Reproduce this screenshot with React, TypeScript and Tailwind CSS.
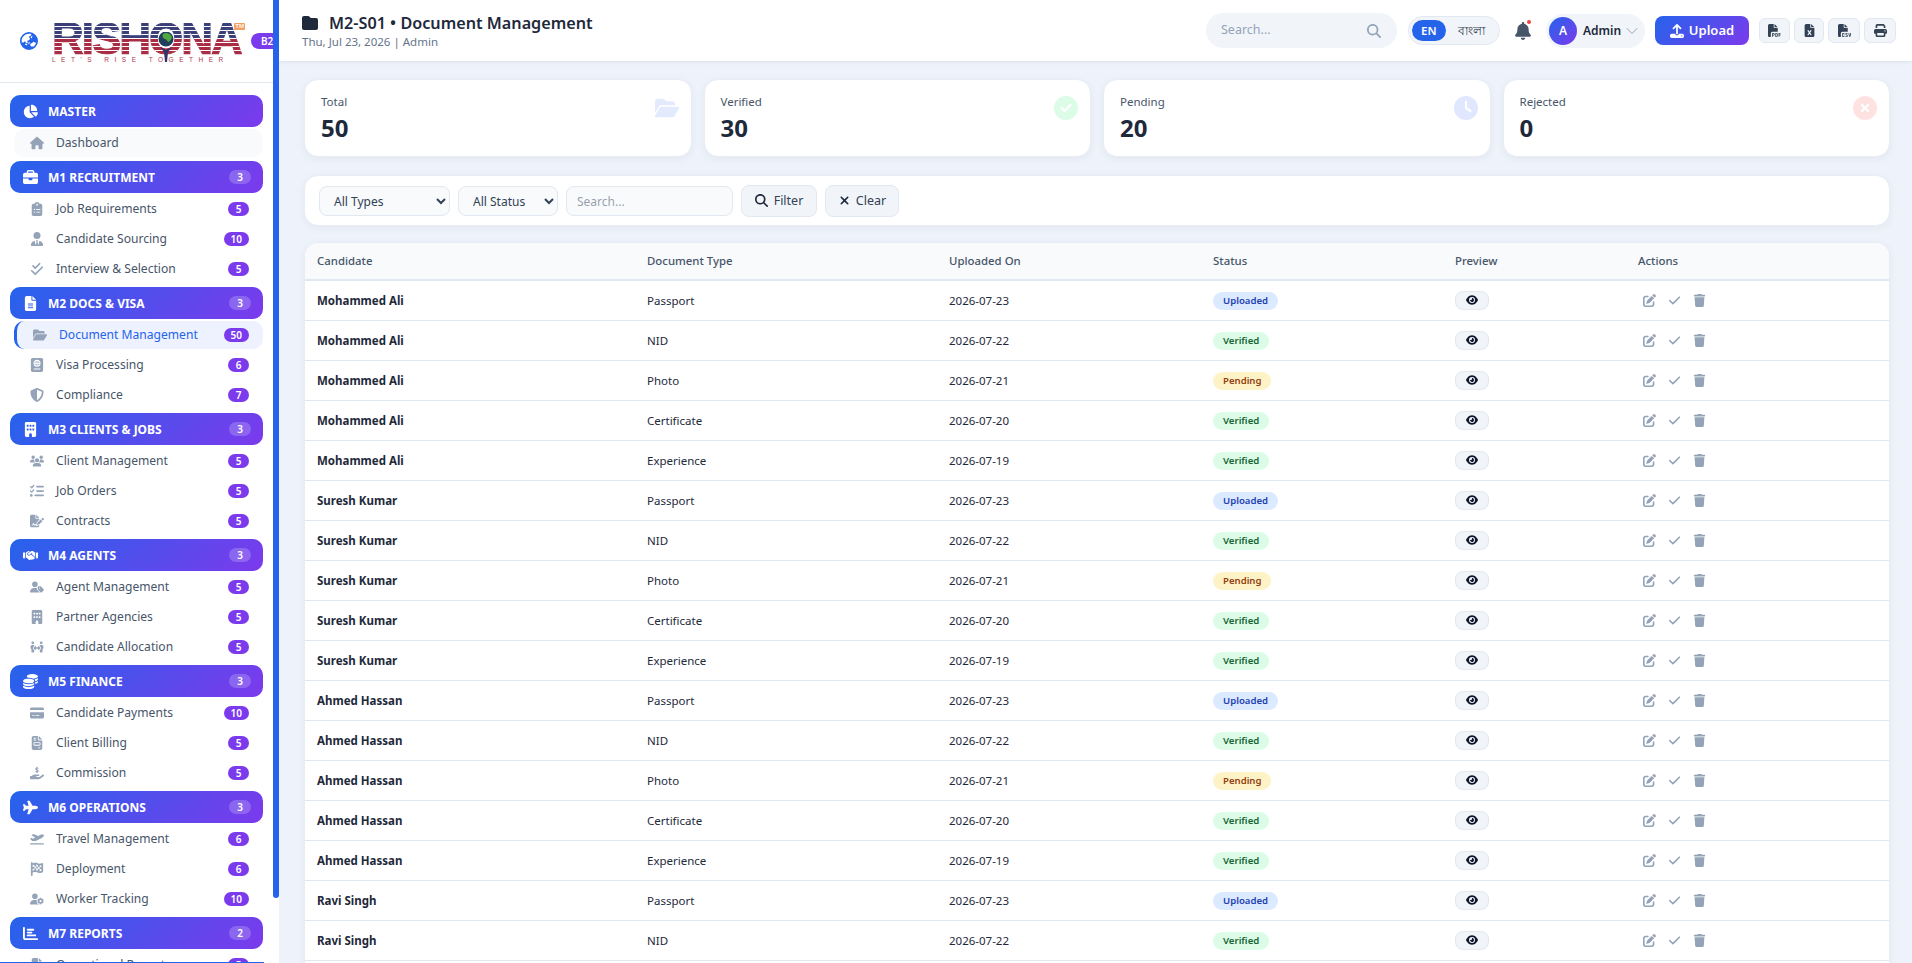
import type { IconType } from "react-icons";
import { ChevronDown } from "lucide-react";
import {
  FaBell,
  FaBriefcase,
  FaBuilding,
  FaChartBar,
  FaChartPie,
  FaCheck,
  FaCheckDouble,
  FaCircleCheck,
  FaCircleXmark,
  FaClipboardList,
  FaClock,
  FaCoins,
  FaCreditCard,
  FaEarthAsia,
  FaEye,
  FaFileCsv,
  FaFileExcel,
  FaFileInvoice,
  FaFileLines,
  FaFilePdf,
  FaFileSignature,
  FaFlagCheckered,
  FaFolder,
  FaFolderOpen,
  FaHandHoldingDollar,
  FaHandshake,
  FaHouse,
  FaListCheck,
  FaMagnifyingGlass,
  FaPassport,
  FaPenToSquare,
  FaPeopleArrows,
  FaPlane,
  FaPlaneDeparture,
  FaPrint,
  FaShieldHalved,
  FaTrash,
  FaUpload,
  FaUserGear,
  FaUserTag,
  FaUserTie,
  FaUsers,
  FaXmark,
} from "react-icons/fa6";

type NavItem = { label: string; icon: IconType; count?: number; active?: boolean };
type NavGroup = { title: string; icon: IconType; count?: number; items: NavItem[] };

const NAV_GROUPS: NavGroup[] = [
  { title: "MASTER", icon: FaChartPie, items: [{ label: "Dashboard", icon: FaHouse }] },
  {
    title: "M1 RECRUITMENT",
    icon: FaBriefcase,
    count: 3,
    items: [
      { label: "Job Requirements", icon: FaClipboardList, count: 5 },
      { label: "Candidate Sourcing", icon: FaUserTie, count: 10 },
      { label: "Interview & Selection", icon: FaCheckDouble, count: 5 },
    ],
  },
  {
    title: "M2 DOCS & VISA",
    icon: FaFileLines,
    count: 3,
    items: [
      { label: "Document Management", icon: FaFolderOpen, count: 50, active: true },
      { label: "Visa Processing", icon: FaPassport, count: 6 },
      { label: "Compliance", icon: FaShieldHalved, count: 7 },
    ],
  },
  {
    title: "M3 CLIENTS & JOBS",
    icon: FaBuilding,
    count: 3,
    items: [
      { label: "Client Management", icon: FaUsers, count: 5 },
      { label: "Job Orders", icon: FaListCheck, count: 5 },
      { label: "Contracts", icon: FaFileSignature, count: 5 },
    ],
  },
  {
    title: "M4 AGENTS",
    icon: FaHandshake,
    count: 3,
    items: [
      { label: "Agent Management", icon: FaUserTag, count: 5 },
      { label: "Partner Agencies", icon: FaBuilding, count: 5 },
      { label: "Candidate Allocation", icon: FaPeopleArrows, count: 5 },
    ],
  },
  {
    title: "M5 FINANCE",
    icon: FaCoins,
    count: 3,
    items: [
      { label: "Candidate Payments", icon: FaCreditCard, count: 10 },
      { label: "Client Billing", icon: FaFileInvoice, count: 5 },
      { label: "Commission", icon: FaHandHoldingDollar, count: 5 },
    ],
  },
  {
    title: "M6 OPERATIONS",
    icon: FaPlane,
    count: 3,
    items: [
      { label: "Travel Management", icon: FaPlaneDeparture, count: 6 },
      { label: "Deployment", icon: FaFlagCheckered, count: 6 },
      { label: "Worker Tracking", icon: FaUserGear, count: 10 },
    ],
  },
  {
    title: "M7 REPORTS",
    icon: FaChartBar,
    count: 2,
    items: [{ label: "Operational Reports", icon: FaFileLines, count: 5 }],
  },
];

const STATS = [
  { label: "Total", value: "50", icon: FaFolderOpen, color: "text-[#e4eafd]" },
  { label: "Verified", value: "30", icon: FaCircleCheck, color: "text-[#dcfce7]" },
  { label: "Pending", value: "20", icon: FaClock, color: "text-[#e0e7ff]" },
  { label: "Rejected", value: "0", icon: FaCircleXmark, color: "text-[#fee2e2]" },
];

const CANDIDATES = ["Mohammed Ali", "Suresh Kumar", "Ahmed Hassan", "Ravi Singh"];

const DOCUMENTS = [
  { type: "Passport", date: "2026-07-23", status: "Uploaded" },
  { type: "NID", date: "2026-07-22", status: "Verified" },
  { type: "Photo", date: "2026-07-21", status: "Pending" },
  { type: "Certificate", date: "2026-07-20", status: "Verified" },
  { type: "Experience", date: "2026-07-19", status: "Verified" },
];

const STATUS_STYLES: Record<string, string> = {
  Uploaded: "bg-[#dbeafe] text-[#1e40af]",
  Verified: "bg-[#dcfce7] text-[#166534]",
  Pending: "bg-[#fef3c7] text-[#92400e]",
};

const EXPORT_ACTIONS = [
  { icon: FaFilePdf, width: "w-[31px]" },
  { icon: FaFileExcel, width: "w-[30px]" },
  { icon: FaFileCsv, width: "w-[32px]" },
  { icon: FaPrint, width: "w-[32px]" },
];

function Logo() {
  return (
    <div className="relative h-[40px] w-[190px] shrink-0 pt-[2px]">
      <div className="h-[32px] bg-[repeating-linear-gradient(180deg,transparent_0,transparent_3px,#ffffff_3px,#ffffff_4px),linear-gradient(180deg,#3b3f78_50%,#a82c44_50%)] bg-clip-text font-['Liberation_Sans',sans-serif] text-[44px] leading-[32px] font-bold tracking-[-2px] text-transparent [-webkit-text-stroke:1px_transparent]">
        RISHONA
      </div>
      <div className="mt-[1px] font-['Liberation_Sans',sans-serif] text-[6.5px] leading-[7px] tracking-[5.5px] whitespace-nowrap text-[#b0384f]">
        LET'S RISE TOGETHER
      </div>
      <span className="absolute top-[2px] right-[-3px] rounded-[1px] bg-[#f0a060] px-[1px] font-['Liberation_Sans',sans-serif] text-[6px] leading-[7px] font-bold text-[#fff3e6]">
        TM
      </span>
      <svg className="absolute top-[11px] left-[106px] h-[30px] w-[16px]" viewBox="0 0 16 30" aria-hidden="true">
        <circle cx="8" cy="7" r="7.5" fill="#1f3f5c" />
        <path d="M5 2c3-2 7-1 9 3 0 2-2 3-3 5-2 0-2-3-4-3S4 4 5 2z" fill="#4fa83d" />
        <path d="M2 15l4 5 1 10h2l1-10 4-5-6 3z" fill="#2f3568" />
      </svg>
    </div>
  );
}

function SidebarGroup({ group }: { group: NavGroup }) {
  const GroupIcon = group.icon;
  return (
    <div className="pb-[2px]">
      <div className="mb-[2px] flex h-[32px] items-center rounded-[10px] bg-[linear-gradient(135deg,#2563eb,#7c3aed)] pr-[12px] pl-[10px] text-white">
        <span className="mr-[8px] flex w-[20px] shrink-0 justify-center">
          <GroupIcon className="h-[15px] w-auto" />
        </span>
        <span className="flex-1 pt-[1px] text-[12px] font-bold">{group.title}</span>
        {group.count !== undefined && (
          <span className="rounded-full bg-white/20 px-[8px] text-[10px] leading-[14px] font-semibold">{group.count}</span>
        )}
      </div>
      {group.items.map((item) => {
        const ItemIcon = item.icon;
        return (
          <div
            key={item.label}
            className={
              item.active
                ? "mb-[2px] ml-[4px] flex h-[28px] items-center rounded-[10px] border-l-[3px] border-[#2563eb] bg-[#eef2ff] pr-[14px] pl-[13px] text-[#2563eb]"
                : group.title === "MASTER"
                  ? "mb-[2px] ml-[4px] flex h-[28px] items-center rounded-[10px] bg-[#f8fafc] pr-[14px] pl-[13px] text-[#475569]"
                  : "mb-[2px] ml-[4px] flex h-[28px] items-center rounded-[10px] pr-[14px] pl-[13px] text-[#475569]"
            }
          >
            <span className="mr-[10px] flex w-[19px] shrink-0 justify-center text-[#94a3b8]">
              <ItemIcon className="h-[14px] w-auto" />
            </span>
            <span className="flex-1 pt-[1px] text-[12.1px] whitespace-nowrap">{item.label}</span>
            {item.count !== undefined && (
              <span className="min-w-[21px] rounded-full bg-[#7c3aed] px-[7px] text-center text-[10px] leading-[14px] font-semibold text-white">
                {item.count}
              </span>
            )}
          </div>
        );
      })}
    </div>
  );
}

function Sidebar() {
  return (
    <aside className="relative w-[279px] shrink-0 bg-white">
      <div className="h-full w-[273px] overflow-hidden">
        <div className="flex h-[83px] items-center overflow-hidden border-b border-[#e2e8f0] pl-[20px]">
          <FaEarthAsia className="mr-[14px] shrink-0 text-[18px] text-[#2563eb]" />
          <Logo />
          <span className="ml-[9px] shrink-0 rounded-full bg-[#7c3aed] px-[10px] text-[10px] leading-[16px] font-semibold text-white">
            B2B
          </span>
        </div>
        <nav className="px-[10px] pt-[12px]">
          {NAV_GROUPS.map((group) => (
            <SidebarGroup key={group.title} group={group} />
          ))}
        </nav>
      </div>
      {/* scroll thumb, headless chrome hides the real one */}
      <div className="absolute top-0 right-0 h-[898px] w-[6px] rounded-b-[3px] bg-[#2563eb]" />
      <div className="absolute bottom-0 left-0 h-[1px] w-[264px] bg-[#2563eb]" />
    </aside>
  );
}

function TopBar() {
  return (
    <header className="flex h-[61px] shrink-0 items-center bg-white pr-[16px] pl-[23px] shadow-[0_1px_4px_rgba(15,23,42,0.08)]">
      <div className="flex-1">
        <div className="flex items-center text-[16.2px] leading-[24px] font-semibold text-[#1e293b]">
          <FaFolder className="mr-[11px] text-[16px] text-[#1e293b]" />
          M2-S01 • Document Management
        </div>
        <div className="-mt-[1px] text-[11.5px] leading-[16px] text-[#64748b]">Thu, Jul 23, 2026 | Admin</div>
      </div>

      <div className="flex h-[35px] w-[191px] items-center rounded-full bg-[#f1f5f9] pr-[16px] pl-[15px]">
        <span className="flex-1 text-[12.5px] text-[#94a3b8]">Search...</span>
        <FaMagnifyingGlass className="text-[14px] text-[#94a3b8]" />
      </div>

      <div className="ml-[11px] flex h-[29px] w-[92px] items-center rounded-full border border-[#e2e8f0] bg-[#f1f5f9] pl-[3px]">
        <span className="rounded-full bg-[#2563eb] px-[9px] text-[11.5px] leading-[21px] font-semibold text-white">EN</span>
        <span className="ml-[12px] font-['Noto_Sans_CJK_SC','Noto_Sans',sans-serif] text-[11.5px] text-[#334155]">বাংলা</span>
      </div>

      <div className="relative ml-[14px]">
        <FaBell className="text-[18px] text-[#475569]" />
        <span className="absolute -top-[2px] right-[1px] h-[4px] w-[4px] rounded-full bg-[#ef4444]" />
      </div>

      <div className="ml-[14px] flex h-[34px] w-[99px] items-center rounded-full bg-[#f1f5f9] pl-[3px]">
        <span className="flex h-[28px] w-[28px] items-center justify-center rounded-full bg-[linear-gradient(135deg,#2563eb,#7c3aed)] text-[12px] font-semibold text-white">
          A
        </span>
        <span className="ml-[6px] text-[12px] font-semibold text-[#1e293b]">Admin</span>
        <ChevronDown size={20} strokeWidth={1.2} className="ml-[1px] shrink-0 text-[#94a3b8]" />
      </div>

      <button className="ml-[10px] flex h-[29px] w-[94px] items-center justify-center rounded-[8px] bg-[linear-gradient(135deg,#2563eb,#7c3aed)] text-[13px] font-semibold text-white">
        <FaUpload className="mr-[5px] h-[14px] w-auto" />
        Upload
      </button>

      <div className="ml-[10px] flex gap-[4px]">
        {EXPORT_ACTIONS.map(({ icon: Icon, width }, index) => (
          <button
            key={index}
            className={`flex h-[25px] items-center justify-center rounded-[6px] border border-[#e2e8f0] bg-[#f1f5f9] text-[#334155] ${width}`}
          >
            <Icon className="h-[13px] w-auto" />
          </button>
        ))}
      </div>
    </header>
  );
}

function StatCards() {
  return (
    <div className="mb-[18px] grid grid-cols-4 gap-[12px]">
      {STATS.map(({ label, value, icon: Icon, color }) => (
        <div
          key={label}
          className="relative h-[78px] rounded-[14px] border border-[#e8edf5] bg-white pt-[14px] pl-[16px] shadow-[0_2px_8px_rgba(15,23,42,0.05)]"
        >
          <div className="text-[11.5px] leading-[16px] text-[#475569]">{label}</div>
          <div className="mt-[2px] text-[24px] leading-[32px] font-bold text-[#1e293b]">{value}</div>
          <Icon className={`absolute top-[16px] right-[12px] h-[24px] w-auto ${color}`} />
        </div>
      ))}
    </div>
  );
}

function FilterBar() {
  const fieldClass =
    "h-[30px] rounded-[8px] border border-[#e2e8f0] bg-[#f8fafc] pt-[1px] text-[12px] text-[#334155] outline-none";
  const buttonClass =
    "flex h-[32px] items-center justify-center rounded-[8px] border border-[#e2e8f0] bg-[#f1f5f9] pt-[2px] text-[12.5px] text-[#334155]";
  return (
    <div className="mb-[16px] flex h-[51px] items-center rounded-[14px] border border-[#e8edf5] bg-white pl-[14px] shadow-[0_2px_8px_rgba(15,23,42,0.05)]">
      <select className={`${fieldClass} w-[131px] pl-[10px]`} defaultValue="All Types">
        <option>All Types</option>
        <option>Passport</option>
        <option>NID</option>
      </select>
      <select className={`${fieldClass} ml-[8px] w-[100px] pl-[10px]`} defaultValue="All Status">
        <option>All Status</option>
        <option>Uploaded</option>
        <option>Verified</option>
      </select>
      <input className={`${fieldClass} ml-[8px] h-[29px] w-[167px] px-[10px]`} placeholder="Search..." />
      <button className={`${buttonClass} ml-[8px] w-[76px]`}>
        <FaMagnifyingGlass className="mr-[6px] -mt-[2px] text-[13px] text-[#1e293b]" />
        Filter
      </button>
      <button className={`${buttonClass} ml-[8px] w-[74px]`}>
        <FaXmark className="mr-[5px] -mt-[2px] text-[13px] text-[#1e293b]" />
        Clear
      </button>
    </div>
  );
}

function DocumentTable() {
  const rows = CANDIDATES.flatMap((name) => DOCUMENTS.map((doc) => ({ name, ...doc })));
  return (
    <div className="overflow-hidden rounded-[14px] border border-[#e8edf5] bg-white shadow-[0_2px_8px_rgba(15,23,42,0.05)]">
      <table className="w-full table-fixed border-collapse">
        <thead>
          <tr className="h-[37px] border-b-2 border-[#e2e8f0] bg-[#f8fafc] text-left text-[11.4px] text-[#475569]">
            <th className="w-[330px] pl-[12px] font-medium">Candidate</th>
            <th className="w-[302px] pl-[12px] font-medium">Document Type</th>
            <th className="w-[264px] pl-[12px] font-medium">Uploaded On</th>
            <th className="w-[243px] pl-[12px] font-medium">Status</th>
            <th className="w-[182px] pl-[11px] font-medium">Preview</th>
            <th className="pl-[12px] font-medium">Actions</th>
          </tr>
        </thead>
        <tbody>
          {rows.map((row) => (
            <tr key={row.name + row.type} className="h-[40px] border-b border-[#e2e8f0] text-[11.5px] text-[#1e293b]">
              <td className="pt-[1px] pl-[12px] font-bold">{row.name}</td>
              <td className="pt-[1px] pl-[12px]">{row.type}</td>
              <td className="pt-[1px] pl-[12px]">{row.date}</td>
              <td className="pl-[12px]">
                <span className={`inline-block rounded-full px-[10px] text-[9.6px] leading-[18px] font-semibold ${STATUS_STYLES[row.status]}`}>
                  {row.status}
                </span>
              </td>
              <td className="pl-[11px]">
                <button className="flex h-[19px] w-[34px] items-center justify-center rounded-[8px] border border-[#e2e8f0] bg-[#f1f5f9] text-[#0f172a]">
                  <FaEye className="h-[12px] w-auto" />
                </button>
              </td>
              <td className="pl-[17px]">
                <div className="flex items-center gap-[12px] text-[#94a3b8]">
                  <FaPenToSquare className="h-[13px] w-[13px]" />
                  <FaCheck className="h-[13px] w-[13px]" />
                  <FaTrash className="h-[13px] w-[13px]" />
                </div>
              </td>
            </tr>
          ))}
        </tbody>
      </table>
    </div>
  );
}

export default function App() {
  return (
    <div className="flex h-screen overflow-hidden bg-[#eef2fa] font-['Noto_Sans',sans-serif]">
      <Sidebar />
      <main className="flex min-w-0 flex-1 flex-col">
        <TopBar />
        <div className="flex-1 overflow-hidden pt-[18px] pr-[22px] pl-[25px]">
          <StatCards />
          <FilterBar />
          <DocumentTable />
        </div>
      </main>
    </div>
  );
}
